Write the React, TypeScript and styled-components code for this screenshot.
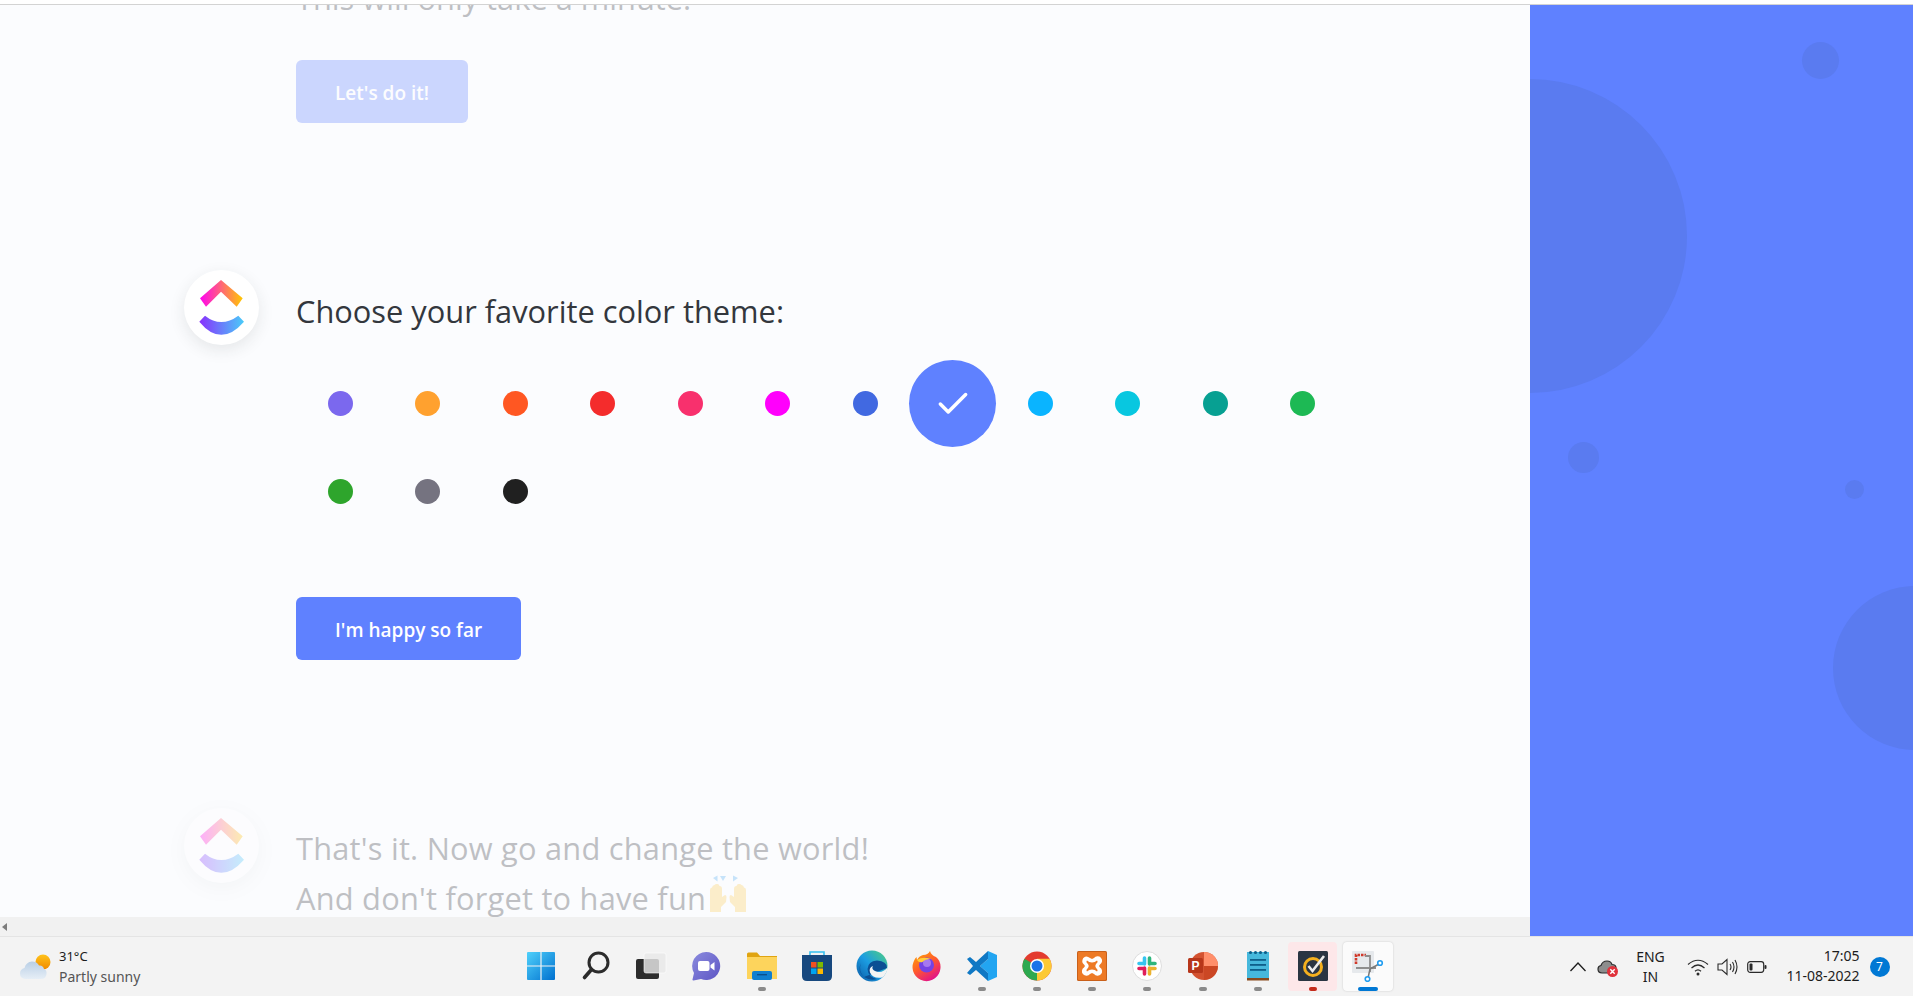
import React from 'react';
import styled, { createGlobalStyle } from 'styled-components';
import { Check } from 'lucide-react';

const SWATCHES = [
  '#7b68ee', '#ffa12f', '#ff5722', '#f42c2c', '#f8306d', '#ff00fc', '#4169e1', '#5f81ff',
  '#0ab4ff', '#08c7e0', '#07a092', '#1db954', '#2ea52c', '#757380', '#202020',
];
const SELECTED = '#5f81ff';

const ClickUpLogo = ({ id }: { id: string }) => (
  <svg width="75" height="75" viewBox="0 0 75 75">
    <defs>
      <linearGradient id={`${id}-top`} x1="0" y1="0" x2="1" y2="0">
        <stop offset="0" stopColor="#ff02f0" />
        <stop offset="1" stopColor="#ffc800" />
      </linearGradient>
      <linearGradient id={`${id}-bottom`} x1="0" y1="0" x2="1" y2="0">
        <stop offset="0" stopColor="#8930fd" />
        <stop offset="1" stopColor="#49ccf9" />
      </linearGradient>
    </defs>
    <path d="M37 10 L58.700 28.300 L52.700 36.700 L37 21.700 L22 36.700 L16 28.300 Z" fill={`url(#${id}-top)`} />
    <path d="M15.300 51.700 L21 45.700 Q37 58.500 54.300 45.700 L60 51.700 Q37 78 15.300 51.700 Z" fill={`url(#${id}-bottom)`} />
  </svg>
);

const RaisedHands = () => (
  <svg width="40" height="40" viewBox="0 0 40 40">
    <path d="M12 2 L18 2 L15 7 Z M5 4 L9.500 1.500 L9.500 7.500 Z M25 1.500 L30 4 L25 7.500 Z" fill="#50acf3" />
    <path d="M2 38 V16 Q2 13.500 4 13.500 Q4.500 11 6.500 11 Q7.500 9.500 9.500 10 Q11 10 11.500 12 Q14 12 14 15 V23 L17 21 Q18.500 21 18.500 23 L18 28 L13 33 V38 Z" fill="#fbcd54" />
    <path d="M38 38 V16 Q38 13.500 36 13.500 Q35.500 11 33.500 11 Q32.500 9.500 30.500 10 Q29 10 28.500 12 Q26 12 26 15 V23 L23 21 Q21.500 21 21.500 23 L22 28 L27 33 V38 Z" fill="#fbcd54" />
  </svg>
);

const WeatherIcon = () => (
  <svg width="32" height="28" viewBox="0 0 32 28">
    <defs>
      <linearGradient id="sun" x1="0" y1="0" x2="0" y2="1">
        <stop offset="0" stopColor="#ffc21a" />
        <stop offset="1" stopColor="#f08a00" />
      </linearGradient>
      <linearGradient id="cloud" x1="0" y1="0" x2="0" y2="1">
        <stop offset="0" stopColor="#b9cfe6" />
        <stop offset="1" stopColor="#e6eef6" />
      </linearGradient>
    </defs>
    <circle cx="24" cy="9" r="7.500" fill="url(#sun)" />
    <path d="M6 26 Q1 25 1 20.500 Q1 16 5.500 15 Q7 9 13 8.500 Q18 8.500 20 12.500 Q24 12 25 16 Q28 17 27.500 21 Q27 26 22 26 Z" fill="url(#cloud)" />
  </svg>
);

const StartIcon = () => (
  <svg width="30" height="30" viewBox="0 0 30 30">
    <defs>
      <linearGradient id="win" x1="0" y1="0" x2="1" y2="1">
        <stop offset="0" stopColor="#4fd1fb" />
        <stop offset="1" stopColor="#0070cf" />
      </linearGradient>
    </defs>
    <path d="M1 2 Q1 1 2 1 H14.400 V14.400 H1 Z M15.600 1 H28 Q29 1 29 2 V14.400 H15.600 Z M1 15.600 H14.400 V29 H2 Q1 29 1 28 Z M15.600 15.600 H29 V28 Q29 29 28 29 H15.600 Z" fill="url(#win)" />
  </svg>
);

const SearchIcon = () => (
  <svg width="30" height="30" viewBox="0 0 30 30">
    <circle cx="17.500" cy="11.500" r="9.500" fill="none" stroke="#2b2b2b" strokeWidth="3" />
    <path d="M10.500 18.500 L3.500 26.500" stroke="#2b2b2b" strokeWidth="3.600" strokeLinecap="round" />
  </svg>
);

const TaskViewIcon = () => (
  <svg width="32" height="32" viewBox="0 0 32 32">
    <rect x="1" y="9" width="23" height="20" rx="2" fill="#2c2c2c" />
    <rect x="9" y="3" width="22" height="20" rx="2" fill="#e8e8e8" fillOpacity="0.82" stroke="#ffffff" strokeWidth="0.600" />
  </svg>
);

const ChatIcon = () => (
  <svg width="30" height="30" viewBox="0 0 30 30">
    <defs>
      <linearGradient id="chat" x1="0" y1="0" x2="1" y2="1">
        <stop offset="0" stopColor="#8b8bde" />
        <stop offset="1" stopColor="#5d55c4" />
      </linearGradient>
    </defs>
    <path d="M15 1 A14 14 0 1 1 10 28 L2.500 29.500 Q1 29.500 1.600 28 L3 22 A14 14 0 0 1 15 1 Z" fill="url(#chat)" />
    <rect x="7" y="10" width="11.500" height="10" rx="2" fill="#fff" />
    <path d="M19.500 14 L23.500 11 V19.500 L19.500 16.500 Z" fill="#fff" />
  </svg>
);

const ExplorerIcon = () => (
  <svg width="30" height="30" viewBox="0 0 30 30">
    <path d="M0 3 Q0 1.500 1.500 1.500 H10 L13 5 H30 V10 H0 Z" fill="#e0a411" />
    <path d="M0 6 H30 V28 H0 Z" fill="#fdd45c" />
    <rect x="5" y="20" width="20" height="9" rx="2" fill="#0f7fd0" />
    <rect x="10" y="23" width="10" height="1.400" fill="#0a4f8c" />
  </svg>
);

const StoreIcon = () => (
  <svg width="30" height="32" viewBox="0 0 30 32">
    <path d="M8 6 V2 H22 V6" fill="none" stroke="#35c0f0" strokeWidth="1.600" />
    <path d="M0 5 H30 V26 Q30 31 25 31 H5 Q0 31 0 26 Z" fill="#17487e" />
    <rect x="9" y="12" width="5.500" height="5.500" fill="#f25022" />
    <rect x="15.500" y="12" width="5.500" height="5.500" fill="#7fba00" />
    <rect x="9" y="18.500" width="5.500" height="5.500" fill="#00a4ef" />
    <rect x="15.500" y="18.500" width="5.500" height="5.500" fill="#ffb900" />
  </svg>
);

const EdgeIcon = () => (
  <svg width="32" height="32" viewBox="0 0 32 32">
    <defs>
      <linearGradient id="edge" x1="0" y1="1" x2="1" y2="0">
        <stop offset="0" stopColor="#0c59a4" />
        <stop offset="0.500" stopColor="#1b9de2" />
        <stop offset="1" stopColor="#52d17c" />
      </linearGradient>
    </defs>
    <circle cx="16" cy="16" r="15.500" fill="url(#edge)" />
    <path d="M31 18 Q31 11 21 10.500 Q12 11 11.500 19 Q12 27 21 29 Q14 31 8 27 Q2 21 5 13 Q1 21 8 27" fill="#0b4f94" />
    <path d="M31.500 17.500 Q26 24 19 21 Q15 19 17 16 Q12.500 17.500 14 22.500 Q17 29 26 27.500 Q31 24 31.500 17.500 Z" fill="#f3f3f3" />
  </svg>
);

const FirefoxIcon = () => (
  <svg width="30" height="32" viewBox="0 0 30 32">
    <defs>
      <linearGradient id="fox" x1="0" y1="0" x2="0.600" y2="1">
        <stop offset="0" stopColor="#ffb000" />
        <stop offset="0.550" stopColor="#ff5a2c" />
        <stop offset="1" stopColor="#e31587" />
      </linearGradient>
    </defs>
    <path d="M18 1 Q19 5 24 7 Q29 11 28.500 18 A14 14 0 1 1 1.500 12 Q3 8 4.500 7 L5 10 Q7 6 11 5 Q16 5 18 1 Z" fill="url(#fox)" />
    <circle cx="14.500" cy="15" r="7.500" fill="#7542e5" />
    <circle cx="15" cy="13" r="4" fill="#a678f0" />
    <path d="M5 10 Q11 6 19 9 Q13 9 10.500 12 Q7 13 5 10 Z" fill="#ffce3a" />
  </svg>
);

const VsCodeIcon = () => (
  <svg width="32" height="32" viewBox="0 0 32 32">
    <path d="M22 1 L31 5 V27 L22 31 Z M22 9 V23 L14 16 Z" fill="#22a5f1" fillRule="evenodd" />
    <path d="M22 1 L10 12 L4 7 L1 9 L7 16 L1 23 L4 25 L10 20 L22 31 V23 L14 16 L22 9 Z" fill="#0f78c4" />
  </svg>
);

const ChromeIcon = () => (
  <svg width="30" height="30" viewBox="0 0 30 30">
    <circle cx="15" cy="15" r="14.500" fill="#e33b2e" />
    <path d="M15 15 L2.440 7.750 A14.500 14.500 0 0 0 15 29.500 L22.250 17 Z" fill="#2da94f" />
    <path d="M15 15 L15 29.500 A14.500 14.500 0 0 0 27.560 7.750 L15 7.750 Z" fill="#fcc934" />
    <circle cx="15" cy="15" r="7" fill="#fff" />
    <circle cx="15" cy="15" r="5.500" fill="#1a73e8" />
  </svg>
);

const XamppIcon = () => (
  <svg width="30" height="30" viewBox="0 0 30 30">
    <rect width="30" height="30" rx="1.500" fill="#c9601a" />
    <rect x="1" y="1" width="28" height="28" rx="1" fill="#ed7a26" />
    <path d="M9.500 5.500 A4.500 4.500 0 0 0 7 13.500 L8 15 L7 16.500 A4.500 4.500 0 1 0 13 23 L15 22 L17 23 A4.500 4.500 0 1 0 23 16.500 L22 15 L23 13.500 A4.500 4.500 0 1 0 17 7 L15 8 L13 7 Q11 5.500 9.500 5.500 Z" fill="#fff" />
    <path d="M10 9.500 Q12 11.500 15 11.500 Q18 11.500 20 9.500 Q21.500 11 19 13 Q17.500 15 19 17 Q21.500 19 20 20.500 Q18 18.500 15 18.500 Q12 18.500 10 20.500 Q8.500 19 11 17 Q12.500 15 11 13 Q8.500 11 10 9.500 Z" fill="#ed7a26" />
  </svg>
);

const SlackIcon = () => (
  <svg width="30" height="30" viewBox="0 0 30 30">
    <circle cx="15" cy="15" r="14.500" fill="#fff" stroke="#dddddd" />
    <g strokeWidth="3.600" strokeLinecap="round">
      <path d="M12.500 7 V13 M7 12.500 H12" stroke="#36c5f0" />
      <path d="M17.500 7 V13 M23 12.500 H18" stroke="#2eb67d" />
      <path d="M17.500 23 V17 M23 17.500 H18" stroke="#ecb22e" />
      <path d="M12.500 23 V17 M7 17.500 H12" stroke="#e01e5a" />
    </g>
  </svg>
);

const PowerPointIcon = () => (
  <svg width="30" height="30" viewBox="0 0 30 30">
    <circle cx="16" cy="15" r="14" fill="#d35230" />
    <path d="M16 1 A14 14 0 0 1 30 15 H16 Z" fill="#ff8f6b" />
    <path d="M16 15 H30 A14 14 0 0 1 16 29 Z" fill="#c43e1c" fillOpacity="0.550" />
    <rect x="0" y="7" width="15" height="15" rx="1.500" fill="#b7361a" />
    <text x="7.500" y="19" fontFamily="Liberation Sans, sans-serif" fontSize="12" fontWeight="700" fill="#fff" textAnchor="middle">P</text>
  </svg>
);

const NotepadIcon = () => (
  <svg width="24" height="32" viewBox="0 0 24 32">
    <rect x="1" y="2" width="22" height="26" fill="#46b8dc" />
    <rect x="1" y="28" width="22" height="2.500" fill="#8a4a1d" />
    <g fill="#0e5f8a">
      <circle cx="4.500" cy="2.500" r="1.600" />
      <circle cx="9.500" cy="2.500" r="1.600" />
      <circle cx="14.500" cy="2.500" r="1.600" />
      <circle cx="19.500" cy="2.500" r="1.600" />
      <rect x="4" y="9" width="16" height="1.800" />
      <rect x="4" y="14" width="16" height="1.800" />
      <rect x="4" y="19" width="16" height="1.800" />
    </g>
  </svg>
);

const NortonIcon = () => (
  <svg width="30" height="30" viewBox="0 0 30 30">
    <rect width="30" height="30" rx="1.500" fill="#2a3542" />
    <circle cx="15" cy="16" r="8.500" fill="none" stroke="#f4b01e" strokeWidth="3" />
    <path d="M10.500 15 L14.500 20 L26 5" fill="none" stroke="#ececec" strokeWidth="2.600" />
  </svg>
);

const SnipIcon = () => (
  <svg width="32" height="32" viewBox="0 0 32 32">
    <rect x="0" y="1" width="22" height="22" rx="1" fill="#e6e9ec" />
    <path d="M4 14 V5 H14" fill="none" stroke="#d13a2b" strokeWidth="2.600" strokeDasharray="2.500 1" />
    <path d="M13 6 H18 V22 M4 18 H24" fill="none" stroke="#8e8e8e" strokeWidth="1.800" />
    <path d="M18 19 L27 14 M18 19 L16 28" stroke="#7a7a7a" strokeWidth="1.500" />
    <circle cx="28" cy="13" r="2.300" fill="#fff" stroke="#1f9cf0" strokeWidth="1.600" />
    <circle cx="15.500" cy="29" r="2.300" fill="#fff" stroke="#1f9cf0" strokeWidth="1.600" />
  </svg>
);

const TASKBAR_APPS: { key: string; icon: React.ReactNode; dot?: 'idle' | 'alert' | 'active' }[] = [
  { key: 'start', icon: <StartIcon /> },
  { key: 'search', icon: <SearchIcon /> },
  { key: 'task-view', icon: <TaskViewIcon /> },
  { key: 'chat', icon: <ChatIcon /> },
  { key: 'explorer', icon: <ExplorerIcon />, dot: 'idle' },
  { key: 'store', icon: <StoreIcon /> },
  { key: 'edge', icon: <EdgeIcon /> },
  { key: 'firefox', icon: <FirefoxIcon /> },
  { key: 'vscode', icon: <VsCodeIcon />, dot: 'idle' },
  { key: 'chrome', icon: <ChromeIcon />, dot: 'idle' },
  { key: 'xampp', icon: <XamppIcon />, dot: 'idle' },
  { key: 'slack', icon: <SlackIcon />, dot: 'idle' },
  { key: 'powerpoint', icon: <PowerPointIcon />, dot: 'idle' },
  { key: 'notepad', icon: <NotepadIcon />, dot: 'idle' },
  { key: 'norton', icon: <NortonIcon />, dot: 'alert' },
  { key: 'snip', icon: <SnipIcon />, dot: 'active' },
];

const DECOR_CIRCLES = [
  { size: 314, x: -157, y: 74 },
  { size: 37, x: 272, y: 37 },
  { size: 31, x: 38, y: 437 },
  { size: 19, x: 315, y: 475 },
  { size: 164, x: 303, y: 581 },
];

export default function App() {
  return (
    <Screen>
      <GlobalStyle />
      <TopStrip />
      <Main>
        <Left>
          <Scroller>
            <Content>
              <Faded>
                <Message>This will only take a minute!</Message>
                <PrimaryButton>Let's do it!</PrimaryButton>
              </Faded>

              <ChatRow $gapTop={147}>
                <Avatar><ClickUpLogo id="logo-a" /></Avatar>
                <Message>Choose your favorite color theme:</Message>
              </ChatRow>
              <SwatchGrid>
                {SWATCHES.map((color) => (
                  <SwatchCell key={color}>
                    {color === SELECTED ? (
                      <SelectedSwatch $color={color}>
                        <Check size={38} strokeWidth={2.2} color="#fff" />
                      </SelectedSwatch>
                    ) : (
                      <Swatch $color={color} />
                    )}
                  </SwatchCell>
                ))}
              </SwatchGrid>
              <ButtonRow>
                <PrimaryButton>I'm happy so far</PrimaryButton>
              </ButtonRow>

              <FadedRow>
                <Avatar><ClickUpLogo id="logo-b" /></Avatar>
                <Message>
                  That's it. Now go and change the world!
                  <br />
                  And don't forget to have fun
                  <EmojiWrap><RaisedHands /></EmojiWrap>
                </Message>
              </FadedRow>
            </Content>
          </Scroller>
          <ScrollTrack>
            <ScrollArrow />
          </ScrollTrack>
        </Left>
        <Panel>
          {DECOR_CIRCLES.map((c) => (
            <DecorCircle key={`${c.x}-${c.y}`} style={{ width: c.size, height: c.size, left: c.x, top: c.y }} />
          ))}
        </Panel>
      </Main>
      <Taskbar>
        <Weather>
          <WeatherIconBox><WeatherIcon /></WeatherIconBox>
          <WeatherText>
            <Temp>31°C</Temp>
            <Forecast>Partly sunny</Forecast>
          </WeatherText>
        </Weather>
        <Apps>
          {TASKBAR_APPS.map(({ key, icon, dot }) => (
            <AppButton key={key} $state={dot}>
              {icon}
              {dot && <Dot $state={dot} />}
            </AppButton>
          ))}
        </Apps>
        <Tray>
          <TrayCaret width="18" height="12" viewBox="0 0 18 12">
            <path d="M1.500 10 L9 2 L16.500 10" fill="none" stroke="#1c1c1c" strokeWidth="1.300" />
          </TrayCaret>
          <CloudWrap>
            <svg width="22" height="22" viewBox="0 0 22 22">
              <path d="M5 17 Q1 17 1 13 Q1 10 4 9.500 Q5.500 5 10 5 Q14 5 15 8.500 Q19 8.500 19 12 L15 17 Z" fill="#8d8d8d" stroke="#2c2c2c" strokeWidth="1.200" />
              <circle cx="15.500" cy="15.500" r="5.500" fill="#e0323c" />
              <path d="M13.300 13.300 L17.700 17.700 M17.700 13.300 L13.300 17.700" stroke="#fff" strokeWidth="1.400" />
            </svg>
          </CloudWrap>
          <Lang>ENG<br />IN</Lang>
          <TrayIcons>
            <svg width="22" height="18" viewBox="0 0 22 18">
              <path d="M1 6.500 Q11 -2 21 6.500 M4.500 10 Q11 4 17.500 10 M8 13.200 Q11 10.500 14 13.200" fill="none" stroke="#2a2a2a" strokeWidth="1.200" />
              <circle cx="11" cy="16" r="1.500" fill="#2a2a2a" />
            </svg>
            <svg width="22" height="18" viewBox="0 0 22 18">
              <path d="M1 6 H5 L10 1.500 V16.500 L5 12 H1 Z" fill="none" stroke="#2a2a2a" strokeWidth="1.100" />
              <path d="M13 6 Q15 9 13 12 M15.500 4 Q18.500 9 15.500 14 M18 2 Q22 9 18 16" fill="none" stroke="#2a2a2a" strokeWidth="1.100" />
            </svg>
            <svg width="20" height="14" viewBox="0 0 20 14">
              <rect x="0.700" y="1.700" width="16" height="10.600" rx="2.500" fill="none" stroke="#2a2a2a" strokeWidth="1.200" />
              <rect x="2.500" y="3.500" width="3" height="7" rx="1" fill="#2a2a2a" />
              <rect x="17.500" y="5" width="2" height="4" rx="1" fill="#2a2a2a" />
            </svg>
          </TrayIcons>
          <Clock>17:05<br />11-08-2022</Clock>
          <Badge>7</Badge>
        </Tray>
      </Taskbar>
    </Screen>
  );
}

const GlobalStyle = createGlobalStyle`
  html, body {
    margin: 0;
    padding: 0;
    overflow: hidden;
    background: #fff;
  }
  * {
    box-sizing: border-box;
  }
`;

const Screen = styled.div`
  width: 1913px;
  height: 996px;
  display: flex;
  flex-direction: column;
  overflow: hidden;
  font-family: 'Open Sans', 'Noto Sans', sans-serif;
`;
const TopStrip = styled.div`
  height: 5px;
  flex: none;
  background: #fff;
  border-bottom: 1px solid #d3d3d3;
`;
const Main = styled.div`
  display: flex;
  height: 931px;
  flex: none;
`;
const Left = styled.div`
  width: 1530px;
  display: flex;
  flex-direction: column;
`;
const Scroller = styled.div`
  flex: 1;
  min-height: 0;
  overflow: hidden;
  background: #fbfcfe;
`;
const Content = styled.div`
  margin-top: -32px;
  padding-left: 184px;
`;
const Faded = styled.div`
  opacity: 0.3;
  padding-left: 112px;
`;
const Message = styled.div`
  font-size: 30.800px;
  line-height: 50px;
  font-weight: 400;
  color: #33373d;
`;
const PrimaryButton = styled.button`
  display: block;
  height: 63px;
  margin-top: 37px;
  padding: 2px 39px 0;
  border: 0;
  border-radius: 6px;
  background: #5f81ff;
  color: #fff;
  font-family: inherit;
  font-size: 19px;
  font-weight: 600;
`;
const ChatRow = styled.div<{ $gapTop: number }>`
  display: flex;
  gap: 37px;
  margin-top: ${(p) => p.$gapTop}px;

  ${Message} {
    padding-top: 16px;
  }
`;
const FadedRow = styled(ChatRow).attrs({ $gapTop: 147.500 })`
  opacity: 0.3;

  ${Message} {
    padding-top: 15px;
    letter-spacing: 0.22px;
  }
`;
const Avatar = styled.div`
  width: 75px;
  height: 75px;
  flex: none;
  border-radius: 50%;
  background: #fff;
  box-shadow: 0 5px 16px rgba(42, 46, 52, 0.1);
`;
const SwatchGrid = styled.div`
  display: grid;
  grid-template-columns: repeat(12, 87.500px);
  grid-auto-rows: 87.500px;
  margin: 15px 0 0 112.500px;
`;
const SwatchCell = styled.div`
  display: flex;
  align-items: center;
  justify-content: center;
`;
const Swatch = styled.div<{ $color: string }>`
  width: 25px;
  height: 25px;
  border-radius: 50%;
  background: ${(p) => p.$color};
`;
const SelectedSwatch = styled.div<{ $color: string }>`
  width: 87px;
  height: 87px;
  display: flex;
  align-items: center;
  justify-content: center;
  border-radius: 50%;
  background: ${(p) => p.$color};
`;
const ButtonRow = styled.div`
  padding-left: 112px;
  margin-top: 62px;
`;
const EmojiWrap = styled.span`
  display: inline-block;
  width: 40px;
  height: 40px;
  margin-left: 2px;
  vertical-align: -4px;
`;
const ScrollTrack = styled.div`
  height: 19px;
  flex: none;
  display: flex;
  align-items: center;
  padding-left: 2px;
  background: #f1f1f1;
`;
const ScrollArrow = styled.div`
  width: 0;
  height: 0;
  border-style: solid;
  border-width: 4px 5px 4px 0;
  border-color: transparent #7d7d7d transparent transparent;
`;
const Panel = styled.div`
  position: relative;
  flex: 1;
  overflow: hidden;
  background: #5f81ff;
`;
const DecorCircle = styled.div`
  position: absolute;
  border-radius: 50%;
  background: #5a7bf0;
`;
const Taskbar = styled.div`
  height: 60px;
  flex: none;
  display: flex;
  align-items: stretch;
  background: #f3f3f3;
  border-top: 1px solid #e4e4e4;
  color: #1c1c1c;
  font-family: 'Noto Sans', 'Open Sans', sans-serif;
`;
const Weather = styled.div`
  width: 513.500px;
  flex: none;
  display: flex;
  align-items: center;
  gap: 8px;
  padding-left: 19px;
`;
const WeatherIconBox = styled.div`
  display: flex;
`;
const WeatherText = styled.div`
  margin-bottom: 2px;
`;
const Temp = styled.div`
  font-size: 13px;
  line-height: 21px;
`;
const Forecast = styled.div`
  font-size: 14px;
  line-height: 19px;
  color: #555;
`;
const Apps = styled.div`
  display: grid;
  grid-template-columns: repeat(16, 55.130px);
`;
const AppButton = styled.div<{ $state?: 'idle' | 'alert' | 'active' }>`
  position: relative;
  display: flex;
  align-items: center;
  justify-content: center;
  padding-bottom: 1px;

  &::before {
    content: '';
    display: ${(p) => (p.$state === 'alert' || p.$state === 'active' ? 'block' : 'none')};
    position: absolute;
    left: 3px;
    right: 3px;
    top: 5px;
    bottom: 5px;
    border-radius: 4px;
    background: ${(p) => (p.$state === 'alert' ? '#fde7e9' : '#fbfbfb')};
    box-shadow: ${(p) => (p.$state === 'active' ? '0 0 2px rgba(0, 0, 0, 0.18)' : 'none')};
  }

  & > svg {
    position: relative;
  }
`;
const Dot = styled.span<{ $state: 'idle' | 'alert' | 'active' }>`
  position: absolute;
  bottom: 5px;
  left: 50%;
  height: 4px;
  width: ${(p) => (p.$state === 'active' ? 20 : 8)}px;
  transform: translateX(-50%);
  border-radius: 2px;
  background: ${(p) => ({ idle: '#8a8a8a', alert: '#c42b1c', active: '#0078d4' })[p.$state]};
`;
const Tray = styled.div`
  flex: 1;
  position: relative;
  display: flex;
  align-items: center;
  padding-left: 173px;
`;
const TrayCaret = styled.svg`
  flex: none;
`;
const CloudWrap = styled.div`
  display: flex;
  margin-left: 10px;
`;
const Lang = styled.div`
  width: 40px;
  margin-left: 12px;
  text-align: center;
  font-size: 14px;
  line-height: 20px;
`;
const TrayIcons = styled.div`
  display: flex;
  align-items: center;
  gap: 8px;
  margin-left: 16px;
`;
const Clock = styled.div`
  width: 90px;
  text-align: right;
  margin: 0 0 2px 3px;
  font-size: 14px;
  line-height: 20px;
`;
const Badge = styled.div`
  width: 20px;
  height: 20px;
  margin-left: 10px;
  border-radius: 50%;
  background: #0078d4;
  color: #fff;
  font-size: 12px;
  line-height: 20px;
  text-align: center;
`;
